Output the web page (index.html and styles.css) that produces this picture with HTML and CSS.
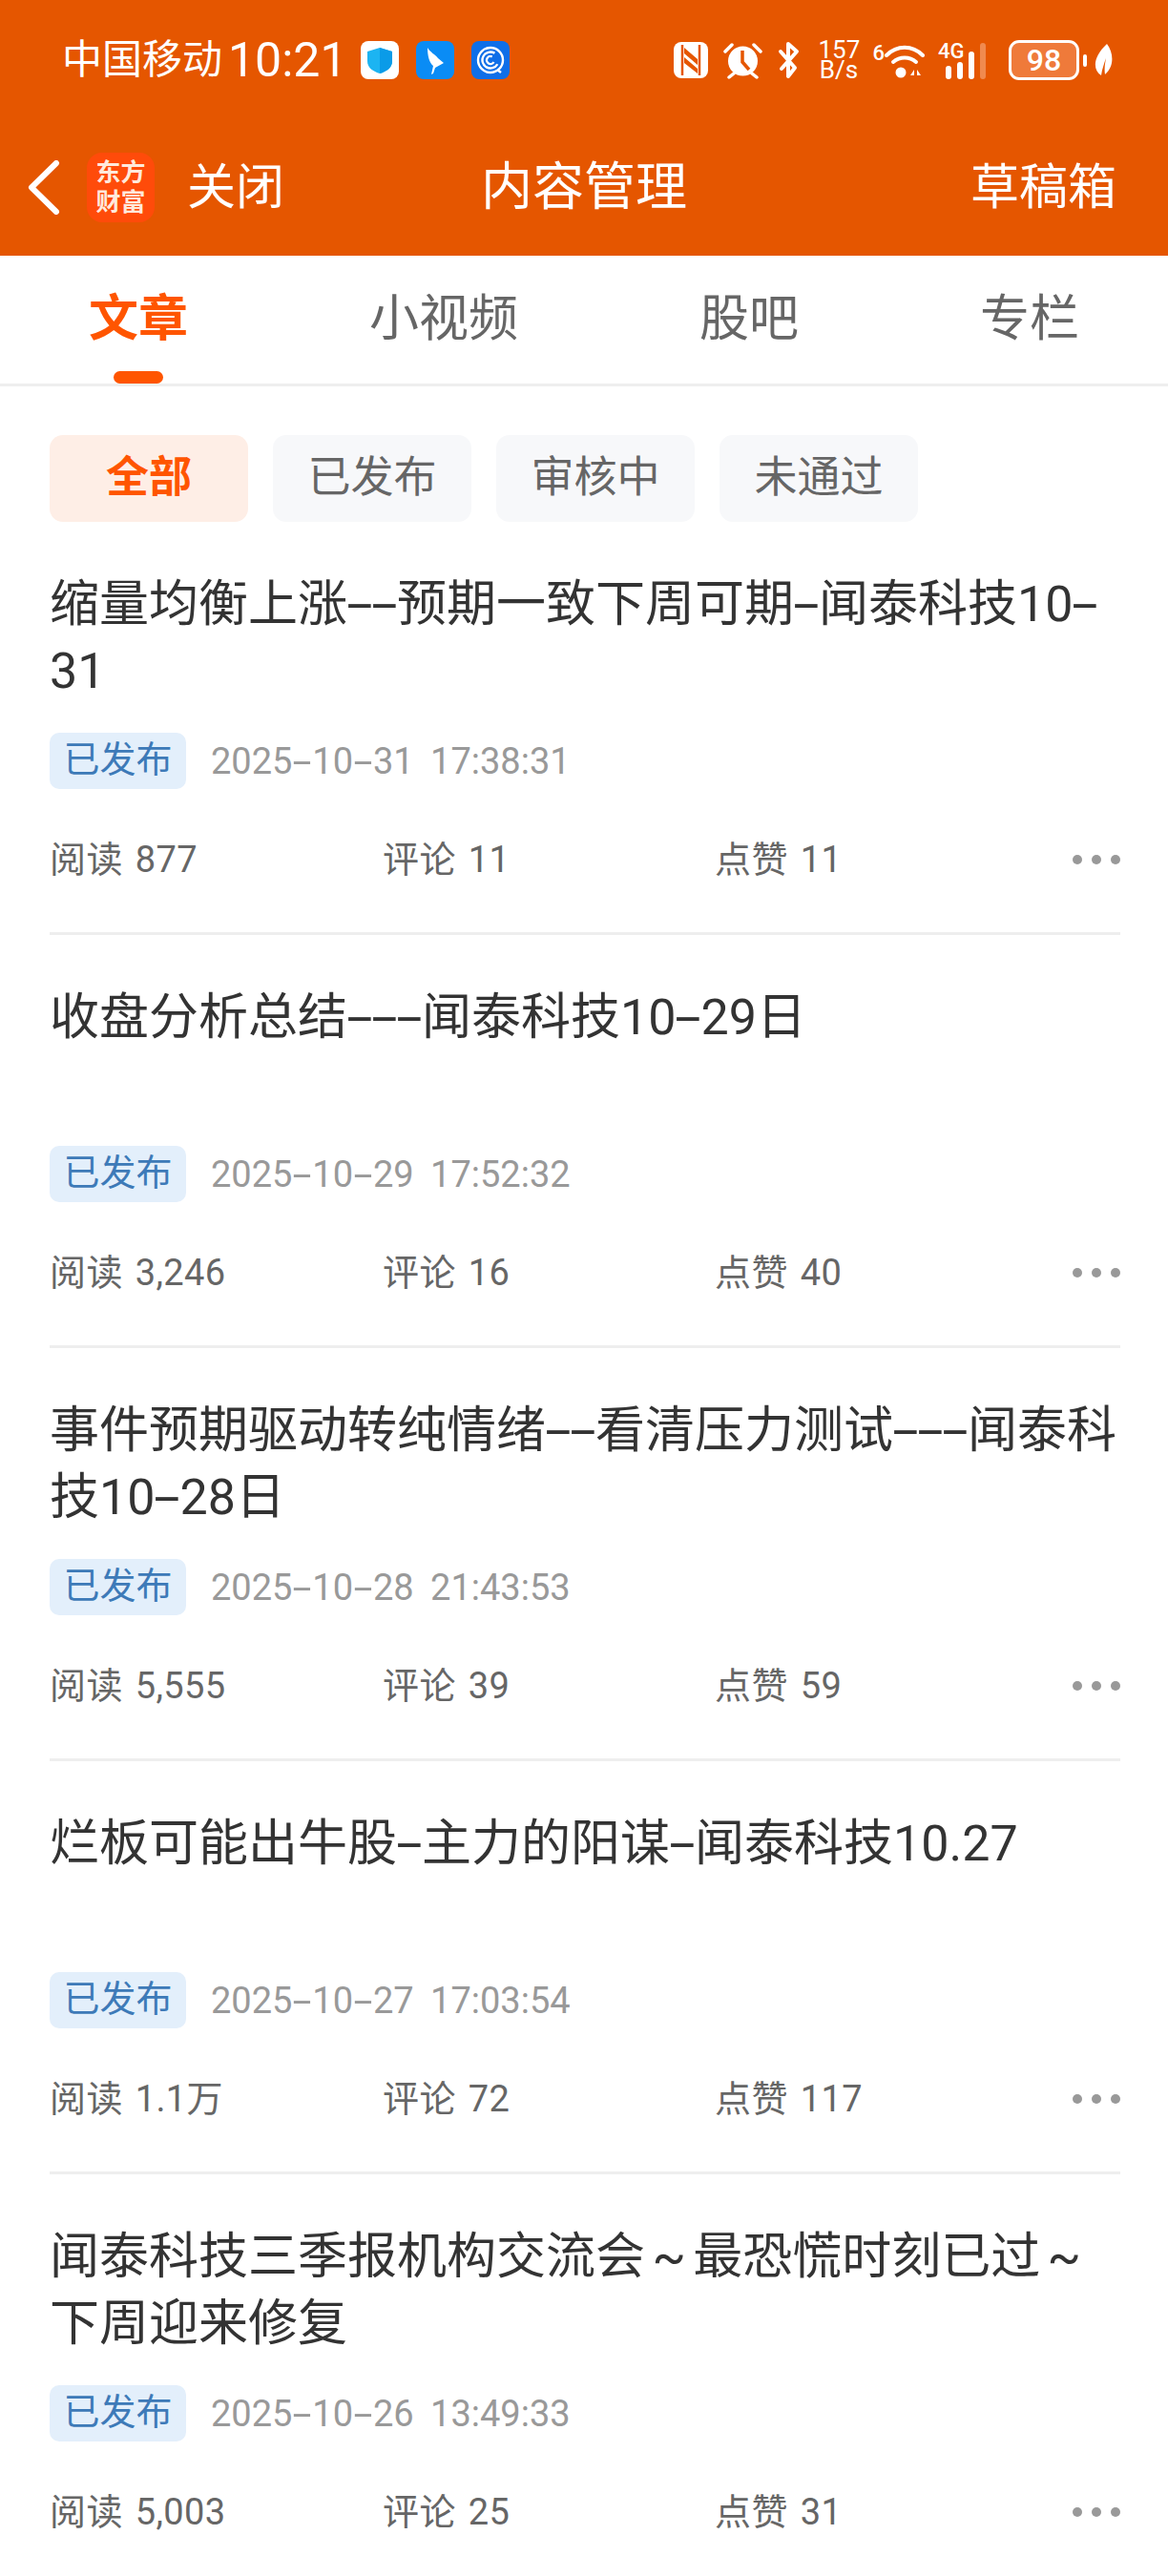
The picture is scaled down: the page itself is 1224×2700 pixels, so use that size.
FILE: index.html
```html
<!DOCTYPE html>
<html lang="zh-CN">
<head>
<meta charset="UTF-8">
<title>内容管理</title>
<link rel="stylesheet" href="styles.css">
</head>
<body>

<header class="header">
  <div class="statusbar">
    <div class="status-left">
      <span class="carrier">中国移动</span>
      <span class="clock">10:21</span>
      <div class="app-icons">
        <svg class="app-icon" viewBox="0 0 40 40"><rect width="40" height="40" rx="8" fill="#fff"/><path d="M20 7l13 4v10c0 7-6 11-13 13C13 32 7 28 7 21V11z" fill="#1cb4f2"/><path d="M20 7l13 4v10c0 7-6 11-13 13z" fill="#0a9be8"/></svg>
        <svg class="app-icon" viewBox="0 0 40 40"><rect width="40" height="40" rx="8" fill="#0a8cf5"/><path d="M12 7c3 5 8 7 11 11l6 5-9 5-2 6-2 1 2-9c-4-3-6-10-6-19z" fill="#fff"/></svg>
        <svg class="app-icon" viewBox="0 0 40 40"><rect width="40" height="40" rx="8" fill="#0f6fe8"/><g fill="none" stroke="#fff" stroke-width="2.4"><circle cx="20" cy="20" r="13"/><circle cx="20" cy="20" r="8.5" stroke-dasharray="40 14" transform="rotate(30 20 20)"/><circle cx="20" cy="20" r="4" stroke-dasharray="18 8" transform="rotate(30 20 20)"/></g><path d="M27 30l4 3" stroke="#fff" stroke-width="2.4"/></svg>
      </div>
    </div>
    <div class="status-right">
      <svg class="ic-nfc" viewBox="0 0 36 38"><rect x="0" y="0" width="36" height="38" rx="8" fill="#fff"/><path d="M9 3v32M27 3v32" stroke="#e55600" stroke-width="2.5"/><path d="M11 6l14 12v6L11 12zM11 16l14 12v5L11 22z" fill="#e55600"/></svg>
      <svg class="ic-alarm" viewBox="0 0 41 40"><circle cx="20.5" cy="21" r="15.5" fill="#fff"/><path d="M20 10v12l7 8" fill="none" stroke="#e55600" stroke-width="3.5"/><path d="M2 11l7-7M39 11l-7-7M6 38l5-4M35 38l-5-4" stroke="#fff" stroke-width="3.5" stroke-linecap="round"/></svg>
      <svg class="ic-bt" viewBox="0 0 24 40"><path d="M3 11l15 17-7 9V3l9 8L4 29" fill="none" stroke="#fff" stroke-width="4" stroke-linejoin="round" stroke-linecap="round"/></svg>
      <div class="netspeed">157<br>B/s</div>
      <div class="wifi">
        <span class="wifi-six">6</span>
        <svg class="ic-wifi" viewBox="0 0 42 40"><g fill="none" stroke="#fff" stroke-width="4" stroke-linecap="round"><path d="M2 15c11-11 27-11 38 0"/><path d="M9 22c7-6 17-6 24 0"/></g><circle cx="17" cy="33" r="5.500" fill="#fff"/><path d="M27 36l4-6v6zM34 30l4 6h-4z" fill="#fff"/></svg>
      </div>
      <div class="signal">
        <span class="signal-type">4G</span>
        <div class="bars">
          <i class="bar bar-1"></i><i class="bar bar-2"></i><i class="bar bar-3"></i><i class="bar bar-4"></i>
        </div>
      </div>
      <div class="battery">
        <span class="battery-body">98</span>
        <i class="battery-nub"></i>
      </div>
      <svg class="ic-leaf" viewBox="0 0 20 34"><path d="M13 0c7 9 8 24-2 32-1-6 0-11 1-17-2 6-4 11-5 18C-2 27-2 14 13 0z" fill="#fff"/></svg>
    </div>
  </div>

  <nav class="navbar">
    <div class="nav-left">
      <svg class="ic-back" viewBox="0 0 34 57"><path d="M30 3L4 28.500 30 54" fill="none" stroke="#fff" stroke-width="6" stroke-linecap="round" stroke-linejoin="round"/></svg>
      <div class="logo"><span>东方</span><span>财富</span></div>
      <span class="nav-text nav-close">关闭</span>
    </div>
    <h1 class="nav-title">内容管理</h1>
    <span class="nav-text nav-drafts">草稿箱</span>
  </nav>
</header>

<div class="tabs">
  <a class="tab active">文章</a>
  <a class="tab">小视频</a>
  <a class="tab">股吧</a>
  <a class="tab">专栏</a>
</div>

<div class="filters">
  <span class="chip active">全部</span>
  <span class="chip">已发布</span>
  <span class="chip">审核中</span>
  <span class="chip">未通过</span>
</div>

<div class="list">
  <div class="item">
    <div class="item-title">缩量均衡上涨<span class="dash">-</span><span class="dash">-</span>预期一致下周可期<span class="dash">-</span>闻泰科技10<span class="dash">-</span><br>31</div>
    <div class="item-meta"><span class="tag">已发布</span><span class="date">2025<span class="dash">-</span>10<span class="dash">-</span>31 17:38:31</span></div>
    <div class="item-stats">
      <span class="stat">阅读 877</span><span class="stat">评论 11</span><span class="stat">点赞 11</span>
      <div class="more"><i></i><i></i><i></i></div>
    </div>
  </div>
  <div class="item">
    <div class="item-title">收盘分析总结<span class="dash">-</span><span class="dash">-</span><span class="dash">-</span>闻泰科技10<span class="dash">-</span>29日</div>
    <div class="item-meta"><span class="tag">已发布</span><span class="date">2025<span class="dash">-</span>10<span class="dash">-</span>29 17:52:32</span></div>
    <div class="item-stats">
      <span class="stat">阅读 3,246</span><span class="stat">评论 16</span><span class="stat">点赞 40</span>
      <div class="more"><i></i><i></i><i></i></div>
    </div>
  </div>
  <div class="item">
    <div class="item-title">事件预期驱动转纯情绪<span class="dash">-</span><span class="dash">-</span>看清压力测试<span class="dash">-</span><span class="dash">-</span><span class="dash">-</span>闻泰科<br>技10<span class="dash">-</span>28日</div>
    <div class="item-meta"><span class="tag">已发布</span><span class="date">2025<span class="dash">-</span>10<span class="dash">-</span>28 21:43:53</span></div>
    <div class="item-stats">
      <span class="stat">阅读 5,555</span><span class="stat">评论 39</span><span class="stat">点赞 59</span>
      <div class="more"><i></i><i></i><i></i></div>
    </div>
  </div>
  <div class="item">
    <div class="item-title">烂板可能出牛股<span class="dash">-</span>主力的阳谋<span class="dash">-</span>闻泰科技10.27</div>
    <div class="item-meta"><span class="tag">已发布</span><span class="date">2025<span class="dash">-</span>10<span class="dash">-</span>27 17:03:54</span></div>
    <div class="item-stats">
      <span class="stat">阅读 1.1万</span><span class="stat">评论 72</span><span class="stat">点赞 117</span>
      <div class="more"><i></i><i></i><i></i></div>
    </div>
  </div>
  <div class="item">
    <div class="item-title">闻泰科技三季报机构交流会 ~ 最恐慌时刻已过 ~<br>下周迎来修复</div>
    <div class="item-meta"><span class="tag">已发布</span><span class="date">2025<span class="dash">-</span>10<span class="dash">-</span>26 13:49:33</span></div>
    <div class="item-stats">
      <span class="stat">阅读 5,003</span><span class="stat">评论 25</span><span class="stat">点赞 31</span>
      <div class="more"><i></i><i></i><i></i></div>
    </div>
  </div>
</div>

</body>
</html>
```

FILE: styles.css
```css
html, body { margin: 0; padding: 0; height: 2700px; overflow: hidden; background: #fff; }
body { font-family: Roboto, "Noto Sans CJK SC", sans-serif; color: #333; }

/* header */
.header { height: 268px; background: #e55600; color: #fff; }
.statusbar { height: 126px; box-sizing: border-box; padding: 0 57px 0 65px; display: flex; justify-content: space-between; align-items: center; }
.status-left { display: flex; align-items: center; }
.carrier { font-size: 42px; line-height: 50px; }
.clock { font-size: 50px; line-height: 50px; margin-left: 6px; }
.app-icons { display: flex; gap: 18px; margin-left: 14px; }
.app-icon { width: 40px; height: 40px; display: block; }

.status-right { display: flex; align-items: center; }
.ic-nfc { width: 36px; height: 38px; }
.ic-alarm { width: 41px; height: 40px; margin-left: 16px; }
.ic-bt { width: 24px; height: 40px; margin-left: 16px; }
.netspeed { margin-left: 18px; font-size: 26px; line-height: 21px; width: 43px; text-align: center; }
.wifi { display: flex; align-items: flex-start; margin-left: 14px; }
.wifi-six { font-size: 22px; line-height: 26px; font-weight: 500; }
.ic-wifi { width: 42px; height: 40px; }
.signal { position: relative; width: 57px; height: 40px; margin-left: 14px; }
.signal-type { position: absolute; left: 0; top: -2px; font-size: 22px; line-height: 26px; font-weight: 500; }
.bars { position: absolute; left: 8px; bottom: 0; display: flex; align-items: flex-end; gap: 6px; }
.bar { display: block; width: 6px; border-radius: 3px; background: #fff; }
.bar-1 { height: 14px; }
.bar-2 { height: 18px; }
.bar-3 { height: 29px; }
.bar-4 { height: 38px; background: #f08a4f; }
.battery { display: flex; align-items: center; margin-left: 17px; }
.battery-body { width: 74px; height: 42px; box-sizing: border-box; border: 3px solid #fff; border-radius: 11px; background: #ef7a3a; text-align: center; font-size: 32px; line-height: 36px; font-weight: 500; }
.battery-nub { width: 4px; height: 13px; margin-left: 4px; border-radius: 2px; background: #fff; }
.ic-leaf { width: 20px; height: 34px; margin-left: 8px; }

.navbar { height: 142px; box-sizing: border-box; padding: 0 54px 1px; display: grid; grid-template-columns: 1fr auto 1fr; align-items: center; }
.nav-left { display: flex; align-items: center; margin-left: -25px; }
.ic-back { width: 34px; height: 57px; display: block; }
.logo { width: 71px; height: 73px; margin-left: 28px; border-radius: 16px; background: #ff4b0a; display: flex; flex-direction: column; align-items: center; justify-content: center; font-size: 26px; line-height: 31px; font-weight: 700; color: #ffe9dc; }
.nav-text { font-size: 51px; line-height: 70px; }
.nav-close { margin-left: 34px; }
.nav-title { margin: 0; font-size: 54px; line-height: 70px; font-weight: 400; }
.nav-drafts { justify-self: end; }

/* tabs */
.tabs { height: 137px; box-sizing: border-box; padding: 0 93px; border-bottom: 3px solid #eee; display: flex; justify-content: space-between; }
.tab { position: relative; font-size: 52px; line-height: 133px; height: 134px; color: #666; }
.tab.active { color: #ff5500; font-weight: 700; }
.tab.active::after { content: ""; position: absolute; left: 26px; right: 26px; bottom: 0; height: 13px; border-radius: 7px; background: #ff5500; }

/* filter chips */
.filters { padding: 51px 52px 0; display: flex; gap: 26px; }
.chip { width: 208px; height: 91px; border-radius: 14px; background: #f7f8fa; color: #666; font-size: 45px; line-height: 90px; text-align: center; }
.chip.active { background: #feeee6; color: #ff5500; font-weight: 700; }

/* list */
.list { padding: 0 50px 0 52px; }
.item { padding: 52px 0 51px; border-bottom: 3px solid #eee; }
.item-title { min-height: 140px; font-size: 52px; line-height: 70px; color: #333; word-spacing: -5.500px; }
.dash { display: inline-block; width: .5em; text-align: center; transform: scaleX(1.9); }
.item-meta { margin-top: 29px; display: flex; align-items: center; }
.tag { width: 143px; height: 59px; border-radius: 10px; background: #e3effb; color: #3d7ab8; font-size: 38px; line-height: 57px; text-align: center; }
.date { margin-left: 26px; font-size: 38px; color: #999; word-spacing: 8px; }
.date .dash { width: .55em; }
.item-stats { margin-top: 49px; height: 50px; display: flex; align-items: center; font-size: 38px; line-height: 50px; color: #666; }
.stat { width: 349px; word-spacing: 3px; letter-spacing: .4px; }
.stat:nth-child(2) { width: 348px; }
.more { margin-left: auto; display: flex; gap: 10px; }
.more i { display: block; width: 10px; height: 10px; border-radius: 50%; background: #999; }
```
